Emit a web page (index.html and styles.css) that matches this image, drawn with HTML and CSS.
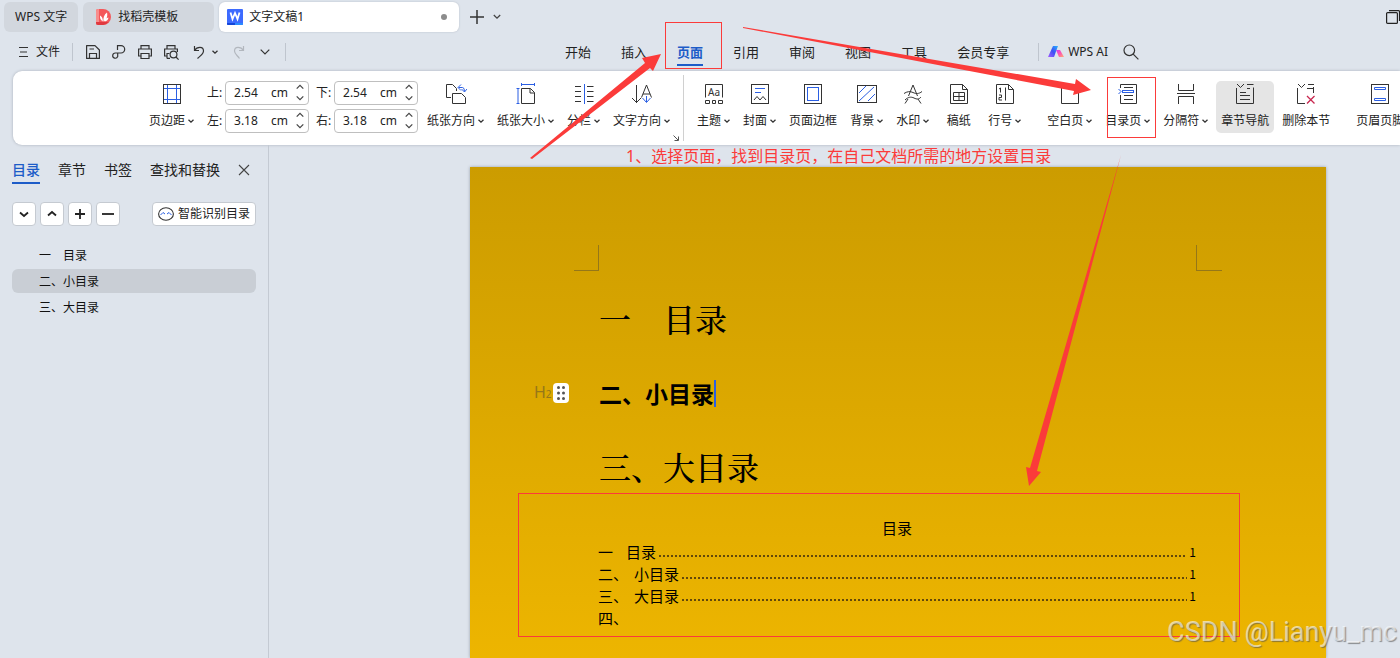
FILE: index.html
```html
<!DOCTYPE html>
<html lang="zh-CN">
<head>
<meta charset="utf-8">
<title>文字文稿1 - WPS 文字</title>
<link rel="stylesheet" href="styles.css">
</head>
<body>
<svg class="defs" aria-hidden="true">
  <symbol id="caret" viewBox="0 0 6 4"><path d="M.5.7 3 3.1 5.5.7" fill="none" stroke="#333" stroke-width="1.3"/></symbol>
  <symbol id="steps" viewBox="0 0 8 18"><path d="M.7 4.6 4 1.3 7.3 4.6M.7 12.4 4 15.7 7.3 12.4" fill="none" stroke="#444" stroke-width="1.2"/></symbol>
</svg>

<header class="titlebar">
  <button class="tab tab-home">WPS 文字</button>
  <button class="tab tab-docer">
    <svg width="16" height="16" viewBox="0 0 16 16"><path d="M2 0h5a8 8 0 0 1 0 16H2a2 2 0 0 1-2-2V2a2 2 0 0 1 2-2z" fill="#f4575a"/><path d="M0 2a2 2 0 0 1 2-2h1v16H2a2 2 0 0 1-2-2z" fill="#f88d8c"/><path d="M0 13h12.500A8 8 0 0 1 7 16H2a2 2 0 0 1-2-2z" fill="#e0393f"/><path d="M7.500 12.500C7 9 8 5.500 11 3.500c.8 3.500 0 7-3.500 9zM6.800 12.500C4.500 11 3.800 9 4 6.500c2 1 3 3 2.800 6zM8.500 12.500c.5-2 2-3.500 4-4-.3 2.200-1.500 3.700-4 4z" fill="#fff"/></svg>
    找稻壳模板
  </button>
  <button class="tab tab-active">
    <svg width="16" height="16" viewBox="0 0 16 16"><rect width="16" height="16" rx="1" fill="#3d6bff"/><path d="M0 14h8v2H1a1 1 0 0 1-1-1z" fill="#1546d8"/><path d="M8 14h8v1a1 1 0 0 1-1 1H8z" fill="#2a8bff"/><path d="M3.500 3.500 5.500 10 8 4 10.500 10 12.500 3.500" fill="none" stroke="#fff" stroke-width="1.800"/></svg>
    <span class="tab-name">文字文稿1</span><i class="dirty"></i>
  </button>
  <button class="plain" aria-label="新建"><svg width="14" height="14" viewBox="0 0 14 14"><path d="M7 0v14M0 7h14" stroke="#333" stroke-width="1.500"/></svg></button>
  <button class="plain" aria-label="更多"><svg width="8" height="6" viewBox="0 0 8 6"><path d="M.8 1 4 4.200 7.200 1" fill="none" stroke="#444" stroke-width="1.300"/></svg></button>
  <button class="plain restore" aria-label="还原"><svg width="14" height="14" viewBox="0 0 14 14"><rect x=".6" y="2.600" width="10.800" height="10.800" rx="1" fill="none" stroke="#222" stroke-width="1.200"/><path d="M3 .6h9.500q1 0 1 1V11" fill="none" stroke="#222" stroke-width="1.200"/></svg></button>
</header>

<nav class="menubar">
  <button class="plain file"><svg width="9" height="10" viewBox="0 0 9 10"><path d="M0 .5h9M1 5h7M0 9.500h9" stroke="#333"/></svg>文件</button>
  <i class="vline quick-line"></i>
  <div class="quick">
    <button class="plain" aria-label="保存"><svg width="16" height="16" viewBox="0 0 16 16" fill="none" stroke="#333" stroke-width="1.200"><path d="M1.600 1.600h8.400l4.400 4.400v8.400H1.600z" stroke-linejoin="round"/><path d="M4.500 14v-4.500h7V14M4.500 5h4.500"/></svg></button>
    <button class="plain" aria-label="输出"><svg width="16" height="16" viewBox="0 0 16 16" fill="none" stroke="#333" stroke-width="1.200"><path d="M6.500 6V1.600h3.500a3.600 3.600 0 0 1 0 7.400H4.300a2.600 2.600 0 1 0 2.400 3.600V9"/></svg></button>
    <button class="plain" aria-label="打印"><svg width="16" height="16" viewBox="0 0 16 16" fill="none" stroke="#333" stroke-width="1.200"><path d="M4 5V1.600h8V5M4 12H1.600V5h12.800v7H12M4 9.500h8v5H4z"/></svg></button>
    <button class="plain" aria-label="打印预览"><svg width="16" height="16" viewBox="0 0 16 16" fill="none" stroke="#333" stroke-width="1.200"><path d="M4 5V1.600h8V5M4 12H1.600V5h12.800v3M4 14.400V9.500h2.500M4 14.400h3"/><circle cx="10.500" cy="10.500" r="3.400"/><path d="m13 13 2.600 2.600"/></svg></button>
    <button class="plain undo" aria-label="撤销"><svg width="12" height="14" viewBox="0 0 12 14" fill="none" stroke="#333" stroke-width="1.200"><path d="M1.500 1v4.500H6M1.500 5.500C4 1.500 10.500 1 10.500 6c0 3-3 4.500-6 7.500"/></svg><svg width="6" height="4"><use href="#caret"/></svg></button>
    <button class="plain redo" aria-label="恢复"><svg width="12" height="14" viewBox="0 0 12 14" fill="none" stroke="#b2b7be" stroke-width="1.200"><path d="M10.500 1v4.500H6M10.500 5.500C8 1.500 1.500 1 1.500 6c0 3 3 4.500 5 7.500"/></svg></button>
    <button class="plain" aria-label="自定义"><svg width="10" height="6" viewBox="0 0 10 6"><path d="M.7.7 5 5 9.300.7" fill="none" stroke="#333" stroke-width="1.200"/></svg></button>
  </div>
  <i class="vline"></i>
  <div class="menus">
    <button class="plain">开始</button>
    <button class="plain">插入</button>
    <button class="plain current">页面</button>
    <button class="plain">引用</button>
    <button class="plain">审阅</button>
    <button class="plain">视图</button>
    <button class="plain">工具</button>
    <button class="plain">会员专享</button>
  </div>
  <i class="vline"></i>
  <button class="plain ai"><svg width="16" height="12" viewBox="0 0 16 12"><defs><linearGradient id="g1" x1="1" y1="0" x2="0" y2="1"><stop offset="0" stop-color="#27b5ff"/><stop offset=".5" stop-color="#3d4ff5"/><stop offset="1" stop-color="#a35cff"/></linearGradient><linearGradient id="g2" x1="0" y1="0" x2="1" y2="1"><stop offset="0" stop-color="#c93df5"/><stop offset=".5" stop-color="#ff55b0"/><stop offset="1" stop-color="#ffb070"/></linearGradient></defs><path d="M5 0h5L6 11H0z" fill="url(#g1)"/><path d="M8 4h4l4 7h-5z" fill="url(#g2)"/></svg>WPS AI</button>
  <button class="plain" aria-label="搜索"><svg width="16" height="16" viewBox="0 0 16 16" fill="none" stroke="#333" stroke-width="1.200"><circle cx="6.300" cy="6.300" r="5.300"/><path d="m10.200 10.200 5.200 5.200"/></svg></button>
</nav>

<section class="ribbon">
  <button class="tool"><svg width="20" height="22" viewBox="0 0 20 22" fill="none"><path d="M5.500 1v20M14.500 1v20M1 5.500h18M1 16.500h18" stroke="#2b5fe3"/><rect x="1.500" y="1.500" width="17" height="19" stroke="#333"/></svg><span>页边距<svg width="6" height="4"><use href="#caret"/></svg></span></button>
  <div class="margins">
    <label for="mt">上:</label><div class="spin"><input id="mt" value="2.54"><span>cm</span><svg width="8" height="18"><use href="#steps"/></svg></div>
    <label for="mb" class="second">下:</label><div class="spin"><input id="mb" value="2.54"><span>cm</span><svg width="8" height="18"><use href="#steps"/></svg></div>
    <label for="ml">左:</label><div class="spin"><input id="ml" value="3.18"><span>cm</span><svg width="8" height="18"><use href="#steps"/></svg></div>
    <label for="mr" class="second">右:</label><div class="spin"><input id="mr" value="3.18"><span>cm</span><svg width="8" height="18"><use href="#steps"/></svg></div>
  </div>
  <button class="tool"><svg width="22" height="22" viewBox="0 0 22 22" fill="none" stroke="#333"><path d="M6 14.500H1.500v-13h6l4 4V8M7.500 10.500v10h13v-6l-4-4z"/><path d="M13.500 4.500h4q2 0 2 4M16 1.500l-3 3 3 3M16.500 6l3 3 2.500-3" stroke="#2b5fe3"/></svg><span>纸张方向<svg width="6" height="4"><use href="#caret"/></svg></span></button>
  <button class="tool"><svg width="20" height="22" viewBox="0 0 20 22" fill="none"><path d="M5.500 5.500h9l4 4v11h-13zM14 5.500v4.500h4.500" stroke="#333"/><path d="M5 1.500h14M5.500 0v3M18.500 0v3M2 5v15.500M.5 5.500h3M.5 20.500h3" stroke="#2b5fe3"/></svg><span>纸张大小<svg width="6" height="4"><use href="#caret"/></svg></span></button>
  <button class="tool"><svg width="20" height="22" viewBox="0 0 20 22" fill="none"><path d="M1 3.500h6M1 8.500h6M1 13.500h6M1 18.500h6M13 3.500h6.500M13 8.500h6.500M13 13.500h6.500M13 18.500h6.500" stroke="#333"/><path d="M10.500 1v20" stroke="#2b5fe3"/></svg><span>分栏<svg width="6" height="4"><use href="#caret"/></svg></span></button>
  <button class="tool"><svg width="22" height="22" viewBox="0 0 22 22" fill="none"><path d="M5.500 2v18M1 15l4.500 4.500L10 15M10.500 14.500 15.500 2l5 12.500M12 11h7" stroke="#333"/><path d="M15.500 13v6M11.500 15l4 4.500 4-4.500" stroke="#2b5fe3"/></svg><span>文字方向<svg width="6" height="4"><use href="#caret"/></svg></span></button>
  <div class="group-end"><svg width="6" height="6" viewBox="0 0 6 6"><path d="M.5.5 5 5M5.500 1.500v4h-4" fill="none" stroke="#555"/></svg></div>
  <button class="tool"><svg width="20" height="22" viewBox="0 0 20 22" fill="none" stroke="#333"><path d="M1.500 14.500v-13h17v13M1.500 17.500h4v3h-4zM8.500 17.500h3v3h-3zM14.500 17.500h4v3h-4z"/><text x="4" y="13" class="glyph-aa">Aa</text></svg><span>主题<svg width="6" height="4"><use href="#caret"/></svg></span></button>
  <button class="tool"><svg width="20" height="22" viewBox="0 0 20 22" fill="none"><rect x="1.500" y="1.500" width="17" height="19" stroke="#333"/><path d="M5 5.500h10M5 9.500h6" stroke="#2b5fe3"/><path d="m4 17 3-3.500 3 3.500 3-3.500 3 3.500" stroke="#333"/></svg><span>封面<svg width="6" height="4"><use href="#caret"/></svg></span></button>
  <button class="tool"><svg width="20" height="22" viewBox="0 0 20 22" fill="none"><rect x="1.500" y="1.500" width="17" height="19" stroke="#333"/><rect x="4.500" y="4.500" width="11" height="13" stroke="#2b5fe3"/></svg><span>页面边框</span></button>
  <button class="tool"><svg width="22" height="22" viewBox="0 0 22 22" fill="none"><path d="m3 10 7-7M3 18 18 4M12 18l7-7" stroke="#2b5fe3"/><rect x="1.500" y="2.500" width="19" height="17" stroke="#333"/></svg><span>背景<svg width="6" height="4"><use href="#caret"/></svg></span></button>
  <button class="tool"><svg width="20" height="22" viewBox="0 0 20 22" fill="none" stroke="#333"><path d="M5.500 13 10 2l4.500 11M1 10.500c3-2 6-2.500 9-1s6 1.500 9-1M2 17c3-3 6-3.500 9-2s5 1.500 7-1M5 16l-3 4.500M15 16l3 4.500"/></svg><span>水印<svg width="6" height="4"><use href="#caret"/></svg></span></button>
  <button class="tool"><svg width="20" height="22" viewBox="0 0 20 22" fill="none" stroke="#333"><path d="M1.500 1.500h12l5 5v14h-17zM13.500 1.500v5h5M4.500 9.500h11v8h-11zM4.500 13.500h11M10 9.500v8"/></svg><span>稿纸</span></button>
  <button class="tool"><svg width="20" height="22" viewBox="0 0 20 22" fill="none" stroke="#333"><path d="M1.500 1.500h12l5 5v14h-17zM13.500 1.500v5h5M10.500 4.500v13M4 6l1.500-1v4.500M4 12h2.500v2.500H4V17h3"/></svg><span>行号<svg width="6" height="4"><use href="#caret"/></svg></span></button>
  <i class="rule"></i>
  <button class="tool"><svg width="20" height="22" viewBox="0 0 20 22" fill="none" stroke="#333"><path d="M1.500 1.500h12l5 5v14h-17zM13.500 1.500v5h5"/></svg><span>空白页<svg width="6" height="4"><use href="#caret"/></svg></span></button>
  <button class="tool"><svg width="20" height="22" viewBox="0 0 20 22" fill="none"><path d="M2.500 5V1.500h16v19h-16V12M6 4.500h9M6 12.500h9M6 16.500h9" stroke="#333"/><rect x="4.500" y="7.500" width="11" height="2" stroke="#2b5fe3"/><path d="m.5 6 2.500 2.500L.5 11" stroke="#2b5fe3"/></svg><span>目录页<svg width="6" height="4"><use href="#caret"/></svg></span></button>
  <button class="tool"><svg width="20" height="22" viewBox="0 0 20 22" fill="none" stroke="#333"><path d="M2.500 1v6.500h15V1M1 10.500h18M2.500 21v-7.500h15V21"/></svg><span>分隔符<svg width="6" height="4"><use href="#caret"/></svg></span></button>
  <button class="tool pressed"><svg width="20" height="22" viewBox="0 0 20 22" fill="none" stroke="#333"><path d="M1.500 5v15.500h17v-16M12 1.500h6.500M2 1l3.500 3.500L9 1M12 5.500h3M5 9.500h6M5 12.500h10M5 16.500h10"/></svg><span>章节导航</span></button>
  <button class="tool"><svg width="20" height="22" viewBox="0 0 20 22" fill="none" stroke="#333"><path d="M1.500 5v15.500H9M12 1.500h6M17.500 4v6M2 1l3.500 3.500L9 1M11 5.500h7"/><path d="m11 13 7.500 7.500m0-7.500L11 20.500" stroke="#c8274f" stroke-width="1.300"/></svg><span>删除本节</span></button>
  <i class="rule"></i>
  <button class="tool"><svg width="20" height="22" viewBox="0 0 20 22" fill="none"><rect x="1.500" y="1.500" width="17" height="19" stroke="#333"/><path d="M4.500 4.500h11v2h-11zM4.500 15.500h11v2h-11z" stroke="#2b5fe3"/></svg><span>页眉页脚</span></button>
</section>

<main class="workspace">
  <aside class="outline">
    <div class="outline-tabs">
      <button class="plain current">目录</button>
      <button class="plain">章节</button>
      <button class="plain">书签</button>
      <button class="plain">查找和替换</button>
      <button class="plain" aria-label="关闭"><svg width="12" height="12" viewBox="0 0 12 12"><path d="m1 1 10 10M11 1 1 11" stroke="#444" stroke-width="1.100"/></svg></button>
    </div>
    <div class="outline-tools">
      <button class="box" aria-label="展开"><svg width="12" height="12" viewBox="0 0 12 12"><path d="m2 4.500 4 3.500 4-3.500" fill="none" stroke="#222" stroke-width="1.800"/></svg></button>
      <button class="box" aria-label="折叠"><svg width="12" height="12" viewBox="0 0 12 12"><path d="m2 7.500 4-3.500 4 3.500" fill="none" stroke="#222" stroke-width="1.800"/></svg></button>
      <button class="box" aria-label="增加"><svg width="12" height="12" viewBox="0 0 12 12"><path d="M6 1v10M1 6h10" stroke="#222" stroke-width="1.800"/></svg></button>
      <button class="box" aria-label="减少"><svg width="12" height="12" viewBox="0 0 12 12"><path d="M0 6h12" stroke="#222" stroke-width="1.800"/></svg></button>
      <button class="box smart"><svg width="16" height="14" viewBox="0 0 16 14" fill="none"><ellipse cx="8" cy="7" rx="7.400" ry="6.300" stroke="#333" stroke-width="1.100"/><path d="m2.500 8 2.500-2.500L7 7M13.500 8 11 5.500 9 7" stroke="#2b5fe3"/></svg>智能识别目录</button>
    </div>
    <ul class="outline-list">
      <li>一　目录</li>
      <li class="selected">二、小目录</li>
      <li>三、大目录</li>
    </ul>
  </aside>

  <div class="canvas">
    <article class="page">
      <div class="corners"><i class="corner-left"></i><i class="corner-right"></i></div>
      <h1>一　目录</h1>
      <div class="h2-row">
        <span class="level">H<small>2</small></span>
        <svg class="handle" width="16" height="20" viewBox="0 0 16 20"><rect width="16" height="20" rx="4" fill="#fff"/><g fill="#555"><circle cx="5.500" cy="4.500" r="1.500"/><circle cx="10.500" cy="4.500" r="1.500"/><circle cx="5.500" cy="10" r="1.500"/><circle cx="10.500" cy="10" r="1.500"/><circle cx="5.500" cy="15.500" r="1.500"/><circle cx="10.500" cy="15.500" r="1.500"/></g></svg>
        <h2>二、小目录</h2><i class="cursor"></i>
      </div>
      <h1>三、大目录</h1>
      <div class="toc">
        <p class="toc-title">目录</p>
        <p class="toc-row"><span class="num">一</span><span>目录</span><i class="dots"></i><b>1</b></p>
        <p class="toc-row"><span class="num">二、</span><span>小目录</span><i class="dots"></i><b>1</b></p>
        <p class="toc-row"><span class="num">三、</span><span>大目录</span><i class="dots"></i><b>1</b></p>
        <p class="toc-row"><span class="num">四、</span></p>
      </div>
    </article>
  </div>
</main>

<svg class="marks" width="1400" height="658" viewBox="0 0 1400 658" aria-hidden="true">
  <g fill="none" stroke="#fb3b3a"><rect x="665.500" y="22.500" width="56" height="46"/><rect x="1107.500" y="77.500" width="48" height="60"/><rect x="518.500" y="493.500" width="721" height="143"/></g>
  <g fill="#fb3b3a">
    <path d="M530 158 645 63 642 58 661 54 653 71 650 68 532 159z"/>
    <path d="M743 27 1075 84 1076 79 1091 90 1073 95 1074 91 743 28z"/>
    <path d="M1121 155 1030 468 1026 467 1029 486 1041 472 1037 471z"/>
  </g>
</svg>
<p class="note">1、选择页面，找到目录页，在自己文档所需的地方设置目录</p>
<p class="watermark">CSDN @Lianyu_mc</p>
</body>
</html>
```
FILE: styles.css
```css
* { box-sizing: border-box; }
body {
  margin: 0;
  height: 100vh;
  display: flex;
  flex-direction: column;
  overflow: hidden;
  position: relative;
  background: #dee4ec;
  color: #222;
  font: 12px/16px "Noto Sans", "Noto Sans CJK SC", sans-serif;
}
button, input { font: inherit; color: inherit; }
button { border: 0; padding: 0; white-space: nowrap; flex: none; }
svg { display: block; flex: none; }
p, h1, h2, ul { margin: 0; padding: 0; }
.defs { position: absolute; width: 0; height: 0; }
.plain { background: none; display: flex; align-items: center; }

.titlebar { display: flex; align-items: center; padding: 2px 0 0 4px; flex: none; }
.tab {
  height: 30px;
  display: flex;
  align-items: center;
  gap: 6px;
  padding: 0 10px;
  margin-right: 5px;
  border-radius: 6px;
  background: #d2d7de;
}
.tab-home { padding: 0 11px; }
.tab-docer { width: 131px; padding: 0 13px; }
.tab-active { width: 240px; padding: 0 12px 0 8px; margin-right: 11px; background: #fff; box-shadow: 0 0 2px #b4bac4; }
.tab-name { flex: 1; text-align: left; }
.dirty { width: 6px; height: 6px; border-radius: 50%; background: #8c8c8c; }
.titlebar .plain { margin-right: 9px; }
.titlebar .restore { margin: 0 0 0 auto; }

.menubar { display: flex; align-items: center; height: 39px; padding-left: 19px; flex: none; }
.file { gap: 8px; }
.vline { width: 1px; height: 18px; background: #bfc5ce; }
.quick-line { margin: 0 12px; }
.quick { display: flex; align-items: center; gap: 10px; margin-right: 15px; }
.undo { gap: 7px; margin-left: 4px; }
.redo { margin: 0 5px; }
.menus { display: flex; gap: 30px; margin: 0 29px 0 279px; font-size: 13px; }
.menus .plain { padding: 4px 0; border: 0 solid transparent; border-width: 2px 0; }
.menus .current { color: #1d5cc8; font-weight: 700; border-bottom-color: #1d5cc8; }
.ai { gap: 4px; margin: 0 15px 0 9px; }

.ribbon {
  display: flex;
  align-items: flex-start;
  gap: 13px;
  flex: none;
  height: 74px;
  margin-left: 13px;
  padding: 10px 0 0 136px;
  border-radius: 9px 0 0 9px;
  background: #fff;
  box-shadow: 0 0 3px #a8aeb8;
  white-space: nowrap;
}
.tool {
  display: flex;
  flex-direction: column;
  align-items: center;
  gap: 7px;
  min-width: 33px;
  height: 52px;
  padding: 2px 0 0;
  background: none;
}
.tool span { display: flex; align-items: center; gap: 3px; line-height: 18px; }
.pressed { background: #e5e5e5; border-radius: 5px; padding: 2px 5px 0; margin: 0 -5px; }
.glyph-aa { font-size: 10px; fill: #333; stroke: none; }
.margins {
  display: grid;
  grid-template-columns: 14px 84px 17px 84px;
  gap: 4px;
  align-items: center;
  margin-right: -4px;
}
.second { padding-left: 3px; }
.spin {
  display: flex;
  align-items: center;
  height: 24px;
  padding: 0 4px 0 8px;
  border: 1px solid #bfbfbf;
  border-radius: 4px;
}
.spin input { width: 37px; padding: 0; border: 0; background: none; outline: 0; }
.spin span { flex: 1; }
.rule, .group-end { width: 1px; height: 66px; margin-top: -6px; background: #d0d0d0; }
.group-end { display: flex; align-items: flex-end; justify-content: flex-end; }
.group-end svg { margin: 0 5px 0 0; }

.workspace { display: flex; flex: 1; min-height: 0; }
.outline { width: 269px; flex: none; padding: 16px 12px 0; border-right: 1px solid #c4cad3; }
.outline-tabs { display: flex; gap: 18px; font-size: 14px; line-height: 18px; }
.outline-tabs .plain { padding-bottom: 3px; border-bottom: 2px solid transparent; }
.outline-tabs .current { color: #1d5cc8; font-weight: 500; border-color: #1d5cc8; }
.outline-tools { display: flex; gap: 4px; margin-top: 18px; }
.box {
  display: flex;
  align-items: center;
  justify-content: center;
  width: 24px;
  height: 24px;
  border: 1px solid #c5cad1;
  border-radius: 4px;
  background: #fff;
}
.smart { width: 104px; gap: 4px; margin-left: auto; }
.outline-list { list-style: none; margin-top: 17px; display: grid; gap: 2px; }
.outline-list li { padding: 1px 0 0 27px; line-height: 23px; border-radius: 6px; color: #111; }
.outline-list .selected { background: #c9ced5; }

.canvas { flex: 1; display: flex; padding: 22px 74px 0 201px; overflow: hidden; }
.page {
  flex: 1;
  padding: 78px 104px 0 104px;
  background: linear-gradient(#cc9c00, #edb500);
  box-shadow: 0 0 3px #9aa0aa;
  color: #000;
}
.corners { display: flex; justify-content: space-between; }
.corner-left, .corner-right { width: 26px; height: 26px; border: 0 solid #957719; border-bottom-width: 1px; }
.corner-left { width: 25px; border-right-width: 1px; }
.corner-right { border-left-width: 1px; }
.page h1 { margin: 23px 0 0 25px; font: 500 32px/48px "Noto Serif CJK SC", "Noto Sans CJK SC", serif; }
.h2-row { display: flex; align-items: center; height: 28px; margin: 37px 0 35px -40px; }
.level { width: 19px; font-size: 16px; color: #957719; }
.level small { font-size: 10px; }
.h2-row h2 { margin-left: 30px; font: 700 23px/28px "Noto Sans CJK SC", sans-serif; }
.cursor { width: 2px; height: 27px; background: #2b5fe3; }
.h2-row + h1 { margin-top: 0; }
.toc { margin: 27px 26px 0 24px; font: 15px/22px "Noto Sans CJK SC", sans-serif; }
.toc-title { text-align: center; margin-bottom: 2px; }
.toc-row { display: flex; align-items: center; }
.num { width: 36px; }
.toc-row:nth-child(2) .num { width: 28px; }
.dots { flex: 1; height: 2px; margin: 8px 2px 0 3px; background: repeating-linear-gradient(90deg, #63480a 0 2px, transparent 2px 4px); }
.toc-row b { font-weight: 400; font-size: 12px; }

.marks { position: absolute; left: 0; top: 0; pointer-events: none; }
.note { position: absolute; left: 626px; top: 144px; color: #fb3b3a; font-size: 16px; line-height: 24px; white-space: nowrap; }
.watermark {
  position: absolute;
  right: 3px;
  bottom: 10px;
  font: 27px/32px Roboto, "Liberation Sans", sans-serif;
  color: rgba(255, 255, 255, .6);
  text-shadow: 1px 1px 1px rgba(80, 80, 80, .6);
}
```
